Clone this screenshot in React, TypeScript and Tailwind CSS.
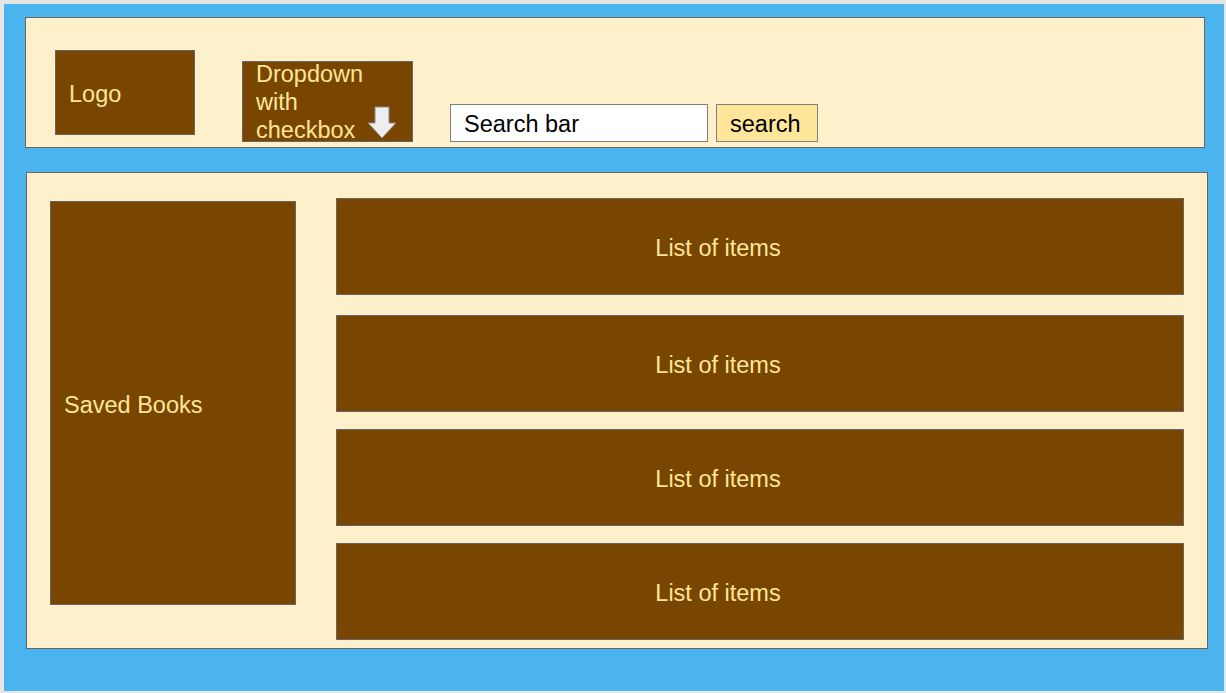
export default function App() {
  const font = "font-['Liberation_Sans',Arial,sans-serif]"
  const gaps = ['mt-[25px]', 'mt-[20px]', 'mt-[17px]', 'mt-[17px]']

  return (
    <div className={`w-[1226px] h-[693px] bg-[#e6e6e6] pt-[4px] pl-[4px] pr-[2px] pb-[2px] ${font}`}>
      <div className="w-full h-full bg-[#4bb4ef] flex flex-col">
        {/* header */}
        <div className="ml-[21px] mt-[13px] w-[1180px] h-[131px] bg-[#fff0cc] border border-[#666666] flex items-start">
          <div className="ml-[29px] mt-[32px] w-[140px] h-[85px] bg-[#784600] border border-[#666666] flex items-center pl-[13px] pt-[4px] text-[23.5px] text-[#ffe599]">
            Logo
          </div>

          <div className="ml-[47px] mt-[43px] w-[171px] h-[81px] bg-[#784600] border border-[#666666] flex pl-[13px] text-[23.5px] text-[#ffe599]">
            <div className="-mt-[2px] leading-[28px]">
              Dropdown
              <br />
              with
              <br />
              checkbox
            </div>
            <svg className="self-end mb-[1px] ml-[4px]" width="30" height="34" viewBox="0 0 30 34">
              <polygon
                points="8,1 22,1 22,17 29,17 15,32 1,17 8,17"
                fill="#eeeeee"
                stroke="#8a8a8a"
                strokeWidth="1"
              />
            </svg>
          </div>

          <div className="ml-[37px] mt-[86px] w-[258px] h-[38px] bg-white border border-[#808080] flex items-center pl-[13px] pt-[4px] text-[23.5px] text-black">
            Search bar
          </div>
          <div className="ml-[8px] mt-[86px] w-[102px] h-[38px] bg-[#ffe599] border border-[#808080] flex items-center pl-[13px] pt-[4px] text-[23.5px] text-black">
            search
          </div>
        </div>

        {/* main */}
        <div className="ml-[22px] mt-[24px] w-[1182px] h-[477px] bg-[#fff0cc] border border-[#666666] flex items-start">
          <div className="ml-[23px] mt-[28px] w-[246px] h-[404px] bg-[#784600] border border-[#666666] flex items-center pl-[13px] pt-[5px] text-[23.5px] text-[#ffe599]">
            Saved Books
          </div>

          <div className="ml-[40px] w-[848px] flex flex-col">
            {gaps.map((g, i) => (
              <div
                key={i}
                className={`${g} h-[97px] bg-[#784600] border border-[#666666] flex items-center justify-center pr-[84px] pt-[4px] text-[23.5px] text-[#ffe599]`}
              >
                List of items
              </div>
            ))}
          </div>
        </div>
      </div>
    </div>
  )
}
